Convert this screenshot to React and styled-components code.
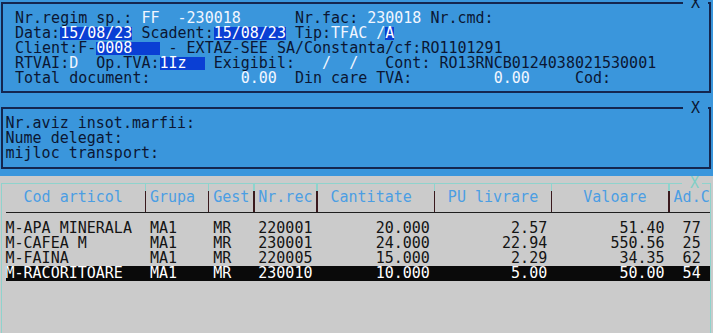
import React from 'react';
import styled, { createGlobalStyle } from 'styled-components';

const GlobalStyle = createGlobalStyle`
  html, body {
    margin: 0;
    padding: 0;
    background: #3a96dc;
  }
  body {
    width: 713px;
    height: 333px;
    overflow: hidden;
    font-family: "DejaVu Sans Mono", "Liberation Mono", monospace;
  }
`;

const Screen = styled.div`
  display: flex;
  flex-direction: column;
  height: 333px;
  background: #3a96dc;
  font-size: 15px;
  line-height: 15px;
`;

const Panel = styled.section`
  position: relative;
  margin: ${({ $top }) => $top}px 2px 0 1px;
  border: 2px solid #14264f;
  padding: ${({ $pad }) => $pad};
`;

const CloseMark = styled.span`
  position: absolute;
  z-index: 2;
  top: ${({ $top }) => $top}px;
  right: ${({ $right }) => $right}px;
  padding: ${({ $pad }) => $pad};
  background: ${({ $bg }) => $bg};
  color: ${({ $color }) => $color};
  line-height: 15px;
`;

const Line = styled.div`
  height: 15px;
  white-space: pre;
  color: #0b1633;
`;

const Value = styled.span`
  color: #f2f6ff;
`;

const Input = styled.span`
  display: inline-block;
  height: 15px;
  vertical-align: top;
  color: #ffffff;
  background: linear-gradient(#0a3fd4, #0a3fd4) 0 1px / 100% 13px no-repeat;
`;

const Lower = styled.div`
  flex: 1;
  display: flex;
  margin-top: 7px;
  padding: 7px 2px 0 1px;
  background: #cbcbcb;
`;

const GridPanel = styled.section`
  position: relative;
  flex: 1;
  border: 1px solid #8fd3cd;
  border-bottom: none;
  padding-left: 3.5px;
`;

const Columns = styled.div`
  display: grid;
  grid-template-columns: 15ch 1ch 6ch 1ch 4ch 1ch 6ch 1ch 12ch 1ch 12ch 1ch 12ch 1ch 4ch;
  white-space: pre;
`;

const HeadRow = styled(Columns)`
  border-bottom: 1px solid #1e1e1e;
  color: #4b9ee3;
`;

const HeadCell = styled.div`
  padding: 6px 0 7px ${({ $indent }) => $indent || 0}ch;
  text-align: ${({ $align }) => $align || 'left'};
`;

const Sep = styled.div`
  justify-self: center;
  width: 1.5px;
  background: linear-gradient(#8fd3cd 0 7px, #3a1a1e 7px 100%);
`;

const Body = styled.div`
  padding-top: 8px;
`;

const Row = styled(Columns)`
  height: 15px;
  color: ${({ $selected }) => ($selected ? '#ffffff' : '#141414')};
  background: ${({ $selected }) => ($selected ? '#0a0a0a' : 'transparent')};
`;

const Cell = styled.div`
  padding-left: ${({ $indent }) => $indent || 0}ch;
  text-align: ${({ $align }) => $align || 'left'};
`;

const header = [
  [['Nr.regim sp.: '], ['FF', 'v'], ['  '], ['-230018', 'v'], ['      Nr.fac: '], ['230018', 'v'], [' Nr.cmd:']],
  [['Data:'], ['15/08/23', 'h'], [' Scadent:'], ['15/08/23', 'h'], [' Tip:'], ['TFAC /', 'v'], ['A', 'h']],
  [['Client:F-'], ['0008   ', 'h'], [' - EXTAZ-SEE SA/Constanta/cf:RO1101291']],
  [['RTVAI:'], ['D', 'v'], ['  Op.TVA:'], ['1Iz  ', 'h'], [' Exigibil:   '], ['/  /', 'v'], ['   Cont: RO13RNCB0124038021530001']],
  [['Total document:          '], ['0.00', 'v'], ['  Din care TVA:         '], ['0.00', 'v'], ['     Cod:']],
];

const columns = [
  { head: 'Cod articol', headAlign: 'center' },
  { head: 'Grupa' },
  { head: 'Gest' },
  { head: 'Nr.rec' },
  { head: 'Cantitate', headIndent: 1, align: 'right' },
  { head: 'PU livrare', headIndent: 1, align: 'right' },
  { head: 'Valoare', headIndent: 3, align: 'right' },
  { head: 'Ad.C', indent: 1 },
];

const items = [
  ['M-APA MINERALA', 'MA1', 'MR', '220001', '20.000', '2.57', '51.40', '77'],
  ['M-CAFEA M', 'MA1', 'MR', '230001', '24.000', '22.94', '550.56', '25'],
  ['M-FAINA', 'MA1', 'MR', '220005', '15.000', '2.29', '34.35', '62'],
  ['M-RACORITOARE', 'MA1', 'MR', '230010', '10.000', '5.00', '50.00', '54'],
];

const Segment = ({ text, kind }) => {
  if (kind === 'v') return <Value>{text}</Value>;
  if (kind === 'h') return <Input>{text}</Input>;
  return <>{text}</>;
};

const App = () => {
  return (
    <Screen>
      <GlobalStyle />

      <Panel $top={2} $pad="7px 0 5px 12px">
        <CloseMark $top={-8} $right={1} $pad="0 8px" $bg="#3a96dc" $color="#0b1633">X</CloseMark>
        {header.map((segs, i) => (
          <Line key={i}>
            {segs.map(([text, kind], j) => (
              <Segment key={j} text={text} kind={kind} />
            ))}
          </Line>
        ))}
      </Panel>

      <Panel $top={14} $pad="7px 0 6px 2.5px">
        <CloseMark $top={-8} $right={1} $pad="0 8px" $bg="#3a96dc" $color="#0b1633">X</CloseMark>
        <Line>Nr.aviz insot.marfii:</Line>
        <Line>Nume delegat:</Line>
        <Line>mijloc transport:</Line>
      </Panel>

      <Lower>
        <GridPanel>
          <CloseMark $top={-8} $right={8} $pad="0 3px 0 8px" $bg="#cbcbcb" $color="#7fcfc6">X</CloseMark>
          <HeadRow>
            {columns.map((c, i) => (
              <React.Fragment key={c.head}>
                {i > 0 && <Sep />}
                <HeadCell $align={c.headAlign} $indent={c.headIndent}>{c.head}</HeadCell>
              </React.Fragment>
            ))}
          </HeadRow>
          <Body>
            {items.map((row, r) => (
              <Row key={row[0]} $selected={r === items.length - 1}>
                {row.map((v, i) => (
                  <React.Fragment key={i}>
                    {i > 0 && <div />}
                    <Cell $align={columns[i].align} $indent={columns[i].indent}>{v}</Cell>
                  </React.Fragment>
                ))}
              </Row>
            ))}
          </Body>
        </GridPanel>
      </Lower>
    </Screen>
  );
};

export default App;
